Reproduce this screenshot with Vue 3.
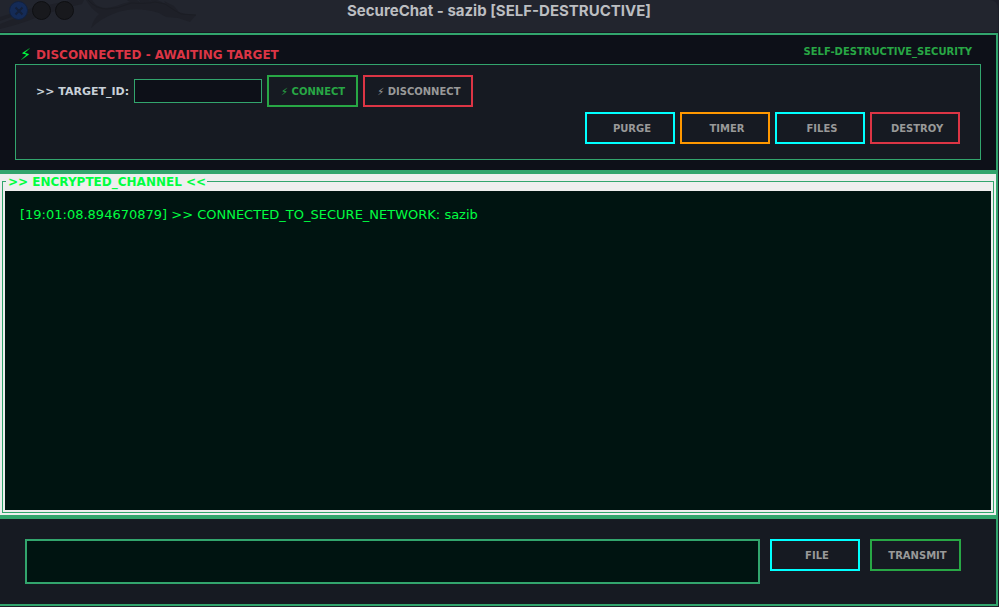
<script setup>
import { ref } from 'vue'

const target = ref('')
const message = ref('')
const actions = [
  { label: 'PURGE', tone: 'cyan' },
  { label: 'TIMER', tone: 'orange' },
  { label: 'FILES', tone: 'cyan' },
  { label: 'DESTROY', tone: 'red' },
]
</script>

<template>
  <div class="window">
    <header class="titlebar">
      <svg class="dragon" width="200" height="32" viewBox="0 0 200 32" aria-hidden="true">
        <path d="M0 17Q25 9 48 5L72 0H84L82 4Q55 10 38 17T0 29V24Q20 16 34 12Q15 15 0 21Z" fill="#1e2028" />
        <path d="M86 0H92Q97 8 106 8C117 7 122 3 130 2L127 0H137L141 3L139 0H149L153 3L150 0H157L166 4L164 1L174 6L179 12L188 15H196L190 22L178 18L166 17L159 13C142 8 128 8 113 14Q102 18 91 28Q94 18 99 14Q91 9 86 0Z" fill="#1e2028" />
        <path d="M88 0Q96 9 107 9T131 3Q146 4 155 2L165 4L174 10L181 14L196 15" fill="none" stroke="#1b1d24" stroke-width="1" />
      </svg>
      <div class="controls">
        <button class="dot close" type="button" aria-label="Close">
          <svg width="10" height="10" viewBox="0 0 10 10"><path d="M1.5 1.5L8.5 8.5M8.5 1.5L1.5 8.5" stroke="#142039" stroke-width="2" /></svg>
        </button>
        <button class="dot" type="button" aria-label="Minimize"></button>
        <button class="dot" type="button" aria-label="Maximize"></button>
      </div>
      <h1>SecureChat - sazib [SELF-DESTRUCTIVE]</h1>
    </header>

    <main class="frame">
      <section class="top">
        <div class="status-row">
          <p class="status"><span class="bolt">⚡</span>DISCONNECTED - AWAITING TARGET</p>
          <p class="security">SELF-DESTRUCTIVE_SECURITY</p>
        </div>
        <div class="panel">
          <form class="connect-row" @submit.prevent>
            <label for="target">&gt;&gt; TARGET_ID:</label>
            <input id="target" v-model="target" type="text" autocomplete="off" />
            <button class="btn fit green lit" type="submit"><span class="spark">⚡</span> CONNECT</button>
            <button class="btn fit red" type="button"><span class="spark">⚡</span> DISCONNECT</button>
          </form>
          <div class="actions">
            <button v-for="a in actions" :key="a.label" type="button" class="btn" :class="a.tone">{{ a.label }}</button>
          </div>
        </div>
      </section>

      <section class="channel">
        <fieldset>
          <legend>&gt;&gt; ENCRYPTED_CHANNEL &lt;&lt;</legend>
          <div class="log">[19:01:08.894670879] &gt;&gt; CONNECTED_TO_SECURE_NETWORK: sazib</div>
        </fieldset>
      </section>

      <form class="compose" @submit.prevent>
        <textarea v-model="message" aria-label="Message"></textarea>
        <button class="btn cyan" type="button">FILE</button>
        <button class="btn transmit green" type="submit">TRANSMIT</button>
      </form>
    </main>
  </div>
</template>

<style>
body {
  margin: 0;
  background: #1d1f29;
}
</style>

<style scoped>
* {
  box-sizing: border-box;
}
.window {
  display: flex;
  flex-direction: column;
  min-height: 100vh;
  padding: 0 1px 1px 0;
  font-family: "DejaVu Sans", sans-serif;
}
.titlebar {
  position: relative;
  display: flex;
  justify-content: center;
  height: 33px;
  background: #22252e;
  border-bottom: 1px solid #161821;
  border-top-right-radius: 8px;
}
.dragon {
  position: absolute;
  left: 0;
  top: 0;
}
.controls {
  position: absolute;
  left: 9px;
  top: 1px;
  display: flex;
  gap: 4px;
}
.dot {
  display: flex;
  align-items: center;
  justify-content: center;
  width: 19px;
  height: 19px;
  padding: 0;
  border: 1px solid #0e0f12;
  border-radius: 50%;
  background: #18191d;
}
.dot.close {
  background: #142b57;
  border-color: #12213f;
}
h1 {
  margin: 0;
  font: 700 15px/22px Inter, sans-serif;
  color: #bcbec1;
}
.frame {
  flex: 1;
  display: flex;
  flex-direction: column;
  border: 2px solid #32a56d;
  border-left: 0;
}
.top {
  padding: 10px 15px;
  background: #0d1018;
}
.status-row {
  display: flex;
  justify-content: space-between;
  height: 19px;
  padding: 0 9px 0 5px;
}
p {
  margin: 0;
}
.status {
  display: flex;
  font-size: 12px;
  font-weight: bold;
  line-height: 20px;
  color: #dc3545;
}
.bolt {
  width: 16px;
  font-size: 16px;
  font-weight: normal;
  color: #00ff41;
}
.security {
  font-size: 10px;
  font-weight: bold;
  line-height: 13px;
  color: #28a745;
}
.panel {
  padding: 10px 20px 15px;
  border: 1px solid #32a56d;
  background: #161a22;
}
.connect-row {
  display: flex;
  align-items: center;
  gap: 5px;
}
label {
  font-size: 11px;
  font-weight: bold;
  color: #c9d1d9;
}
input {
  width: 128px;
  height: 24px;
  padding: 2px 5px;
  border: 1px solid #32a56d;
  border-radius: 0;
  outline: 0;
  background: #0d1018;
  color: #00ff41;
  font: 12px "DejaVu Sans", sans-serif;
}
.actions {
  display: flex;
  justify-content: flex-end;
  gap: 5px;
  padding-top: 5px;
}
.btn {
  width: 90px;
  height: 32px;
  padding: 0 0 0 4px;
  border: 2px solid;
  border-radius: 0;
  background: #161a22;
  font: bold 10px "DejaVu Sans", sans-serif;
  color: #999;
  white-space: nowrap;
}
.btn.fit {
  width: auto;
  padding: 0 11px 0 12px;
}
.btn.transmit {
  width: 91px;
}
.spark {
  font-weight: normal;
}
.cyan { border-color: #00ffff; }
.orange { border-color: #ff9800; }
.red { border-color: #dc3545; }
.green { border-color: #28a745; }
.btn.lit { color: #28a745; }
.channel {
  flex: 1;
  display: flex;
  padding: 0 2px 2px;
  border: solid #32a56d;
  border-width: 4px 0;
  background: #eee;
}
fieldset {
  flex: 1;
  display: flex;
  min-width: 0;
  margin: 0;
  padding: 2px;
  border: 1px solid #32a56d;
}
legend {
  margin-left: 1px;
  padding: 1px 1px 0 2px;
  font-size: 12px;
  font-weight: bold;
  line-height: 14px;
  color: #00ff41;
}
.log {
  flex: 1;
  padding: 15px;
  background: #001411;
  font-size: 13px;
  line-height: 17px;
  color: #00ff41;
}
.compose {
  display: flex;
  align-items: flex-start;
  gap: 10px;
  padding: 20px 35px 20px 25px;
  background: #161a22;
}
textarea {
  flex: 1;
  height: 45px;
  padding: 5px;
  border: 2px solid #32a56d;
  border-radius: 0;
  outline: 0;
  resize: none;
  background: #001411;
  color: #00ff41;
  font: 12px "DejaVu Sans", sans-serif;
}
</style>
